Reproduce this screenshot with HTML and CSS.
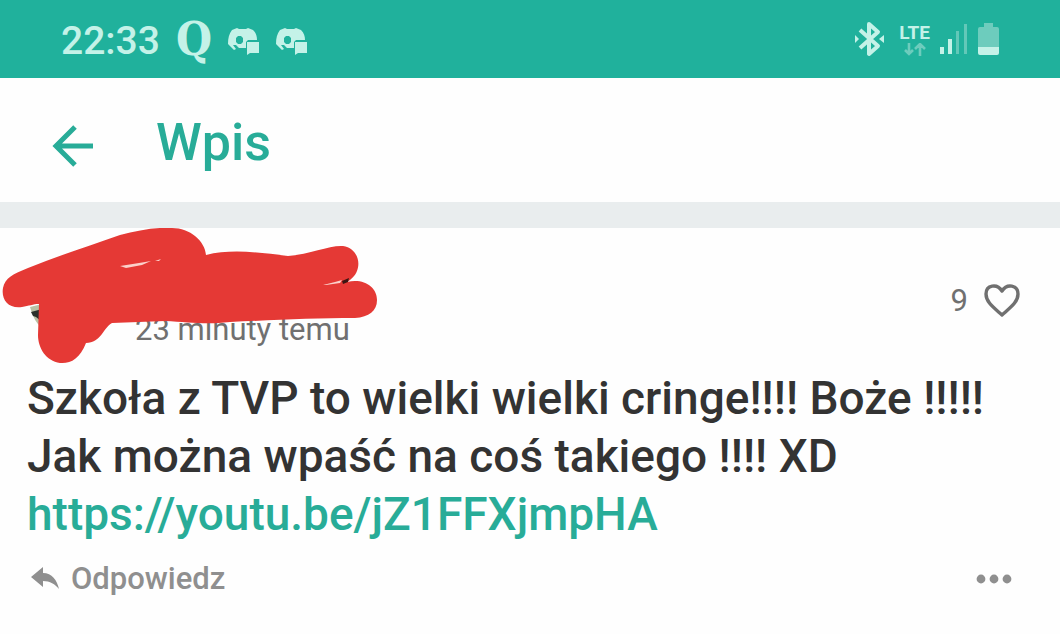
FILE: index.html
```html
<!DOCTYPE html>
<html lang="pl">

<head>
    <meta charset="UTF-8">
    <meta name="viewport" content="width=device-width, initial-scale=1.0">
    <title>Wpis</title>
    <link rel="stylesheet" href="styles.css">
</head>

<body>
    <!-- status bar -->
    <div class="status">
        <div class="status-left">
            <span class="clock">22:33</span>
            <span class="quora">Q</span>
            <svg class="discord" width="32" height="30" viewBox="0 0 32 30">
                <use href="#discord" />
            </svg>
            <svg class="discord" width="32" height="30" viewBox="0 0 32 30">
                <g id="discord">
                    <path fill="#c4f2e8" fill-rule="evenodd" d="M4 4L9 2L11 3H18L20 2L25 4C28 7 29 10 29 14H20L18 16V22L11 22L8 19L5 19L8 23L6 24L0 18C0 12 1 8 4 4ZM8 12V16L10 18H13L15 16V12L13 10H10Z" />
                    <path fill="#c4f2e8" d="M19 16H31V27H22L19 29Z" />
                </g>
            </svg>
        </div>
        <div class="status-right">
            <svg class="bluetooth" width="30" height="36" viewBox="0 0 30 36">
                <path fill="none" stroke="#c4f2e8" stroke-width="4" stroke-linejoin="round" d="M5 9L23 25L14 33V3L23 11L5 27" />
                <path fill="#c4f2e8" d="M0 14l4 4-4 4zM29 14l-5 4 5 4z" />
            </svg>
            <div class="network">
                <span>LTE</span>
                <svg width="22" height="13" viewBox="0 0 22 13">
                    <path fill="none" stroke="#6dccbd" stroke-width="2.6" d="M5 0V11M1 7L5 11L9 7M16 13V2M11 6L16 1L21 6" />
                </svg>
            </div>
            <svg class="signal" width="28" height="32" viewBox="0 0 28 32">
                <path fill="#c4f2e8" d="M0 24h4v7H0zM8 16h4v15H8z" />
                <path fill="#62c8b8" d="M16 8h3v23h-3zM24 1h3v30h-3z" />
            </svg>
            <svg class="battery" width="21" height="33" viewBox="0 0 21 33">
                <path fill="#6dccbd" d="M6 0h9v4h4q2 0 2 2v18H0V6q0-2 2-2h4z" />
                <path fill="#c4f2e8" d="M0 24h21v6q0 2-2 2H2q-2 0-2-2z" />
            </svg>
        </div>
    </div>

    <!-- app bar -->
    <header class="bar">
        <button class="back" type="button" aria-label="Wstecz">
            <svg width="42" height="42" viewBox="0 0 42 42">
                <path fill="none" stroke="#28ac98" stroke-width="5" d="M41 21H4M23 2L4 21L23 40" />
            </svg>
        </button>
        <h1>Wpis</h1>
    </header>

    <!-- post -->
    <main class="post">
        <div class="post-head">
            <span class="time">23 minuty temu</span>
            <button class="like" type="button" aria-label="Lubię to, 9">
                <span>9</span>
                <svg width="36" height="34" viewBox="0 0 36 34">
                    <path fill="none" stroke="#707070" stroke-width="3.4" stroke-linejoin="round" d="M18 31C9 23 2 18 2 10C2 1 13 -1 18 7C23 -1 34 1 34 10C34 18 27 23 18 31Z" />
                </svg>
            </button>
            <!-- hides the avatar and the user name -->
            <svg class="scribble" width="400" height="150" viewBox="0 0 400 150">
                <path fill="#b9bfa4" d="M30 79L42 76V100Q34 94 30 79Z" />
                <path fill="#2b302b" d="M31 84L42 81V94L36 89L33 88Z" />
                <path fill="#e53935" d="M22 79C8 81 1 71 3 60C5 50 13 46 28 40C60 27 92 17 120 7C138 2 158 -1 172 0C190 0 205 13 206 27C230 21 257 24 288 28C311 26 330 17 343 18C361 21 363 43 350 52L347 54C364 50 377 59 377 72C377 83 369 89 355 90C315 90 275 92 230 94C205 97 189 94 165 93L112 95C103 100 101 115 86 115C80 131 70 136 60 135C46 133 38 120 38 107L39 76C33 76 29 78 22 79Z" />
                <path fill="#3a1512" d="M342 53L349 50L348 54L343 56Z" />
                <path fill="#fbd0ca" d="M120 38L139 35L151 33L142 37L126 40ZM155 33L161 31L159 33ZM323 57L335 54L342 52L340 55L326 57Z" />
            </svg>
        </div>
        <p class="content">Szkoła z TVP to wielki wielki cringe!!!! Boże !!!!! Jak można wpaść na coś takiego !!!! XD <a href="https://youtu.be/jZ1FFXjmpHA">https://youtu.be/jZ1FFXjmpHA</a></p>
        <div class="post-foot">
            <button class="reply" type="button">
                <svg width="28" height="24" viewBox="0 0 28 24">
                    <path fill="#8f8f8f" d="M0 10L12 0V6C21 6 26 13 28 22C24 17 19 14 12 14V20Z" />
                </svg>
                Odpowiedz
            </button>
            <button class="more" type="button" aria-label="Więcej">
                <svg width="36" height="10" viewBox="0 0 36 10">
                    <g fill="#8f8f8f">
                        <circle cx="5" cy="5" r="4.4" />
                        <circle cx="18" cy="5" r="4.4" />
                        <circle cx="31" cy="5" r="4.4" />
                    </g>
                </svg>
            </button>
        </div>
    </main>
</body>

</html>
```
FILE: styles.css
```css
html,
body,
h1,
p {
    padding: 0;
    margin: 0;
}

body {
    background-color: #fefefe;
    color: #333;
    font-family: Roboto, "Liberation Sans", sans-serif;
    font-weight: 500;
}

svg {
    display: block;
    flex: none;
}

button {
    display: flex;
    align-items: center;
    padding: 0;
    border: 0;
    background: none;
    font: inherit;
    color: inherit;
    cursor: pointer;
}

/* status bar */

.status {
    display: flex;
    justify-content: space-between;
    align-items: center;
    height: 78px;
    padding: 0 61px;
    background-color: #20b19c;
    color: #c4f2e8;
}

.status-left,
.status-right {
    display: flex;
    align-items: center;
}

.status-left {
    gap: 16px;
}

.status-right {
    gap: 10px;
}

.clock {
    font-size: 39px;
    line-height: 48px;
    padding-top: 4px;
}

.quora {
    font-family: "DejaVu Serif Condensed", "DejaVu Serif", serif;
    font-size: 46px;
    font-weight: 700;
    line-height: 48px;
}

.discord {
    margin-top: 4px;
}

.network {
    display: flex;
    flex-direction: column;
    align-items: center;
    font-size: 19px;
    font-weight: 700;
    line-height: 20px;
}

.bluetooth {
    margin-right: 4px;
}

/* app bar */

.bar {
    display: flex;
    align-items: center;
    gap: 62px;
    height: 124px;
    padding: 0 52px;
    border-bottom: 26px solid #e9edee;
    color: #28ac98;
}

.back {
    padding-top: 12px;
}

.bar h1 {
    padding-top: 6px;
    font-size: 52px;
    line-height: 60px;
    font-weight: 500;
}

/* post */

.post {
    padding: 0 28px 0 27px;
}

.post-head {
    position: relative;
    display: flex;
    justify-content: space-between;
    height: 141px;
    padding: 0 12px 0 108px;
    color: #707070;
    font-size: 31px;
    font-weight: 400;
    line-height: 36px;
}

.time {
    padding-top: 84px;
}

.like {
    gap: 16px;
    padding-top: 5px;
    font-weight: 400;
}

.scribble {
    position: absolute;
    left: -27px;
    top: 0;
}

.content {
    font-size: 46px;
    line-height: 58px;
}

.content a {
    color: #28ac98;
    text-decoration: none;
}

.post-foot {
    display: flex;
    justify-content: space-between;
    padding: 16px 20px 24px 4px;
    color: #8f8f8f;
    font-size: 31px;
    line-height: 40px;
}

.reply {
    gap: 12px;
}
```
